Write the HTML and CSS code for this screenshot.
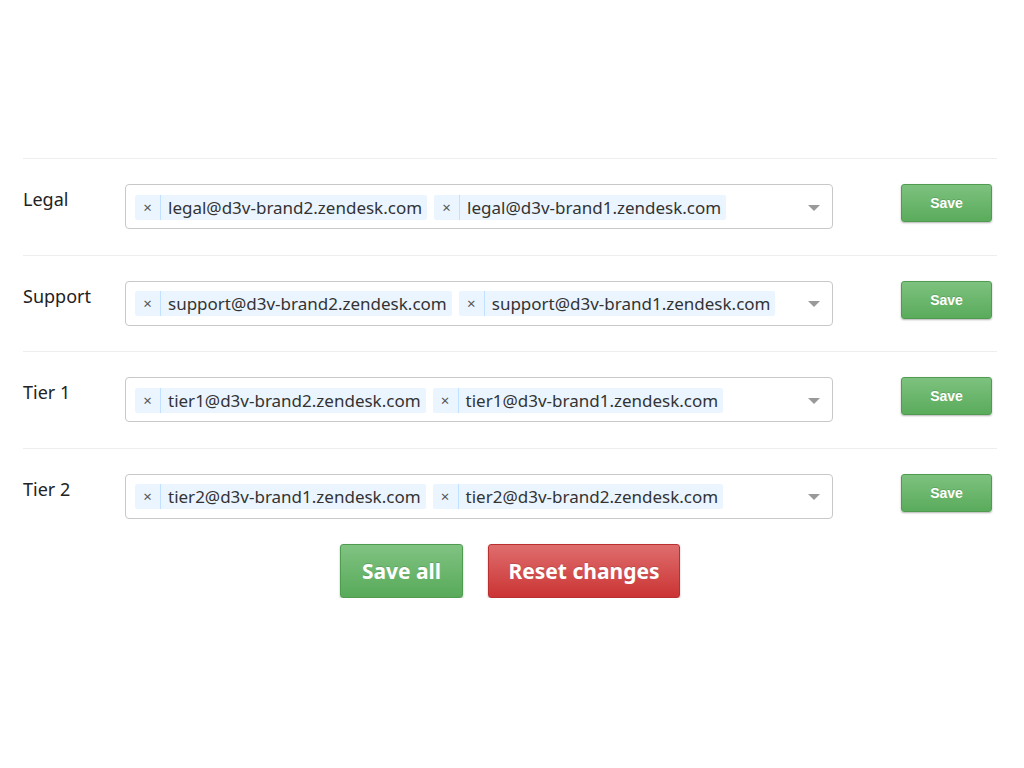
FILE: index.html
```html
<!DOCTYPE html>
<html>
<head>
<meta charset="utf-8">
<link rel="stylesheet" href="styles.css">
</head>
<body>
<div class="page">
  <div class="row">
    <div class="label">Legal</div>
    <div class="select">
      <span class="tag"><span class="x">×</span><span class="t">legal@d3v-brand2.zendesk.com</span></span>
      <span class="tag"><span class="x">×</span><span class="t">legal@d3v-brand1.zendesk.com</span></span>
      <span class="arrow"></span>
    </div>
    <div class="act"><button class="btn-sm">Save</button></div>
  </div>
  <div class="row">
    <div class="label">Support</div>
    <div class="select">
      <span class="tag"><span class="x">×</span><span class="t">support@d3v-brand2.zendesk.com</span></span>
      <span class="tag"><span class="x">×</span><span class="t">support@d3v-brand1.zendesk.com</span></span>
      <span class="arrow"></span>
    </div>
    <div class="act"><button class="btn-sm">Save</button></div>
  </div>
  <div class="row">
    <div class="label">Tier 1</div>
    <div class="select">
      <span class="tag"><span class="x">×</span><span class="t">tier1@d3v-brand2.zendesk.com</span></span>
      <span class="tag"><span class="x">×</span><span class="t">tier1@d3v-brand1.zendesk.com</span></span>
      <span class="arrow"></span>
    </div>
    <div class="act"><button class="btn-sm">Save</button></div>
  </div>
  <div class="row">
    <div class="label">Tier 2</div>
    <div class="select">
      <span class="tag"><span class="x">×</span><span class="t">tier2@d3v-brand1.zendesk.com</span></span>
      <span class="tag"><span class="x">×</span><span class="t">tier2@d3v-brand2.zendesk.com</span></span>
      <span class="arrow"></span>
    </div>
    <div class="act"><button class="btn-sm">Save</button></div>
  </div>
  <div class="footer">
    <button class="btn-lg green">Save all</button>
    <button class="btn-lg red">Reset changes</button>
  </div>
</div>
</body>
</html>
```
FILE: styles.css
```css
html, body { margin: 0; padding: 0; background: #fff; }
body { font-family: "Noto Sans", "Open Sans", sans-serif; color: #222; }
.page { margin-left: 23px; width: 974px; padding-top: 158px; }
.row { display: flex; align-items: flex-start; border-top: 1px solid #eee; padding: 25px 0 25.5px; }
.label { width: 102px; font-size: 18px; line-height: 30px; color: #222; }
.select { position: relative; box-sizing: border-box; width: 708px; height: 45px; border: 1px solid #c8c8c8; border-radius: 4px; padding: 9.5px 9px 0; display: flex; gap: 7px; }
.tag { display: flex; align-items: center; height: 25px; background: #ebf5ff; border-radius: 2px; font-size: 17px; color: #333; }
.tag .x { width: 26px; box-sizing: border-box; text-align: center; font-size: 15px; color: #555; border-right: 1px solid #c2e0ff; height: 25px; line-height: 25px; }
.tag .t { padding: 0 5px 0 7px; line-height: 25px; }
.arrow { position: absolute; right: 12px; top: 19.5px; width: 0; height: 0; border-left: 6px solid transparent; border-right: 6px solid transparent; border-top: 6px solid #999; }
.act { flex: 1; display: flex; justify-content: flex-end; padding-right: 5px; }
.btn-sm { width: 91px; height: 38px; border: 1px solid #4f9c51; border-radius: 3px; background: linear-gradient(#7dc27f, #5aab5c); color: #fff; font-family: "Liberation Sans", Arial, sans-serif; font-weight: bold; font-size: 14px; text-shadow: 0 -1px 0 rgba(0,0,0,0.15); box-shadow: 0 1px 2px rgba(0,0,0,0.3); padding: 0; }
.footer { display: flex; justify-content: center; gap: 25px; }
.btn-lg { height: 54px; border-radius: 3px; color: #fff; font-family: "Noto Sans", "Open Sans", sans-serif; font-weight: bold; font-size: 21px; padding: 0; white-space: nowrap; text-shadow: 0 -1px 0 rgba(0,0,0,0.15); box-shadow: 0 1px 2px rgba(0,0,0,0.3); }
.green { width: 123px; border: 1px solid #4f9c51; background: linear-gradient(#80c382, #58aa5a); }
.red { width: 192px; border: 1px solid #b83030; background: linear-gradient(#df6d6d, #cb3434); }
```
